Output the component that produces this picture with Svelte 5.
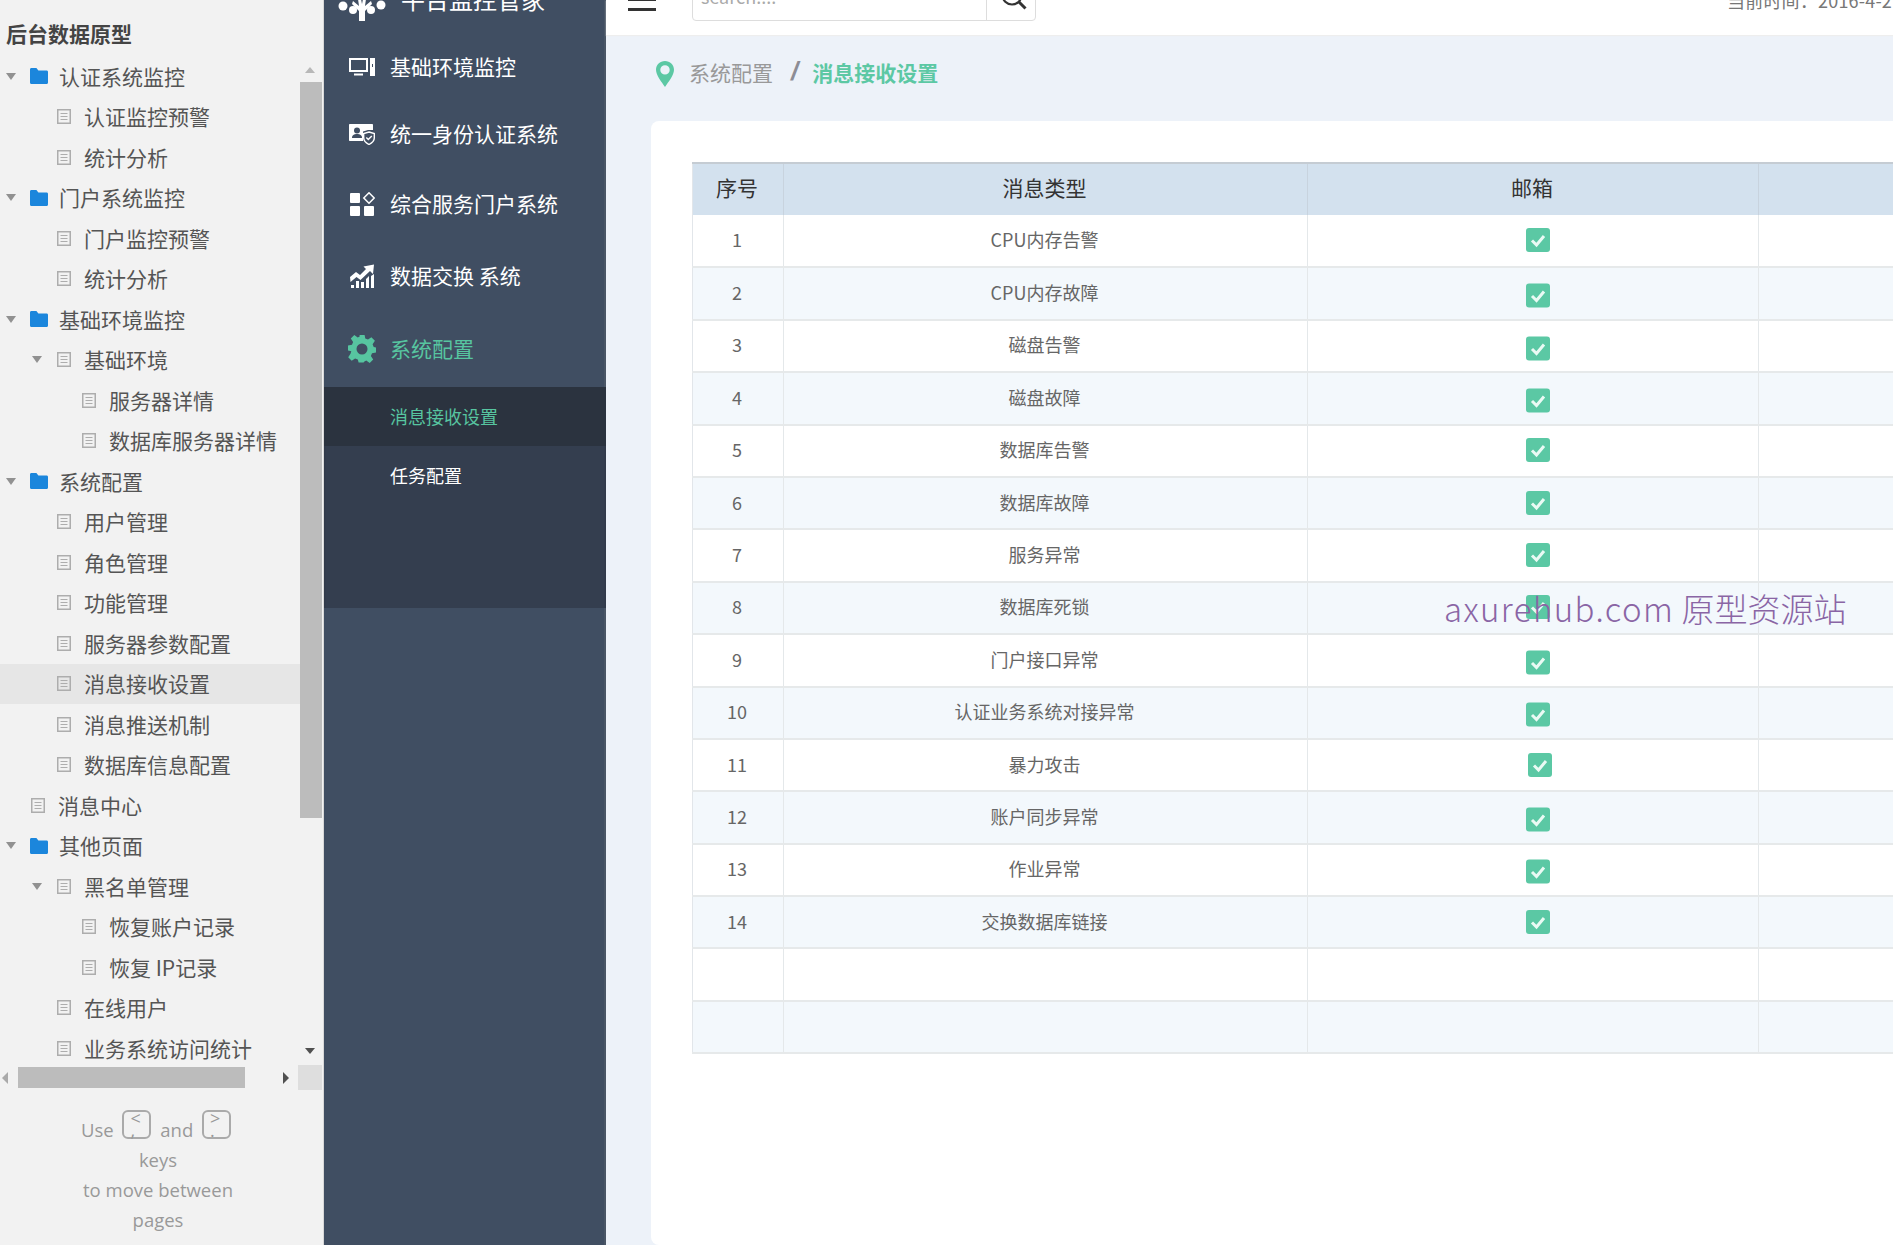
<script>
	const tree = [
		{ label: '认证系统监控', level: 0, folder: true, open: true },
		{ label: '认证监控预警', level: 1 },
		{ label: '统计分析', level: 1 },
		{ label: '门户系统监控', level: 0, folder: true, open: true },
		{ label: '门户监控预警', level: 1 },
		{ label: '统计分析', level: 1 },
		{ label: '基础环境监控', level: 0, folder: true, open: true },
		{ label: '基础环境', level: 1, open: true },
		{ label: '服务器详情', level: 2 },
		{ label: '数据库服务器详情', level: 2 },
		{ label: '系统配置', level: 0, folder: true, open: true },
		{ label: '用户管理', level: 1 },
		{ label: '角色管理', level: 1 },
		{ label: '功能管理', level: 1 },
		{ label: '服务器参数配置', level: 1 },
		{ label: '消息接收设置', level: 1, selected: true },
		{ label: '消息推送机制', level: 1 },
		{ label: '数据库信息配置', level: 1 },
		{ label: '消息中心', level: 0 },
		{ label: '其他页面', level: 0, folder: true, open: true },
		{ label: '黑名单管理', level: 1, open: true },
		{ label: '恢复账户记录', level: 2 },
		{ label: '恢复 IP记录', level: 2 },
		{ label: '在线用户', level: 1 },
		{ label: '业务系统访问统计', level: 1 }
	];

	const navItems = [
		{ label: '基础环境监控', icon: 'monitor' },
		{ label: '统一身份认证系统', icon: 'card' },
		{ label: '综合服务门户系统', icon: 'apps' },
		{ label: '数据交换 系统', icon: 'chart' },
		{ label: '系统配置', icon: 'gear', active: true }
	];

	const rows = [
		{ name: 'CPU内存告警' },
		{ name: 'CPU内存故障', low: true },
		{ name: '磁盘告警', low: true },
		{ name: '磁盘故障', low: true },
		{ name: '数据库告警' },
		{ name: '数据库故障' },
		{ name: '服务异常' },
		{ name: '数据库死锁' },
		{ name: '门户接口异常', low: true },
		{ name: '认证业务系统对接异常', low: true },
		{ name: '暴力攻击', nudge: true },
		{ name: '账户同步异常', low: true },
		{ name: '作业异常', low: true },
		{ name: '交换数据库链接' }
	];
</script>

<div class="page">
	<aside class="side">
		<div class="side-title">后台数据原型</div>
		<div class="tree">
			{#each tree as item}
				<div class="row level{item.level}" class:selected={item.selected}>
					<span class="caret-slot">
						{#if item.open}<i class="caret"></i>{/if}
					</span>
					{#if item.folder}
						<svg class="folder" viewBox="0 0 18 16" width="18" height="16">
							<path d="M0 1.5C0 .7.6 0 1.400 0h5l2 2.500h8.200c.8 0 1.400.6 1.400 1.400v10.600c0 .8-.6 1.500-1.400 1.500H1.400C.6 16 0 15.300 0 14.500z" fill="#1b86dc" />
						</svg>
					{:else}
						<svg class="doc" viewBox="0 0 14 15" width="14" height="15">
							<rect x=".75" y=".75" width="12.500" height="13.500" fill="none" stroke="#adadad" stroke-width="1.500" />
							<path d="M3.500 4.500h7M3.500 7.500h7M3.500 10.500h7" stroke="#adadad" stroke-width="1.200" />
						</svg>
					{/if}
					<span class="row-label">{item.label}</span>
				</div>
			{/each}
			<div class="vbar">
				<i class="arrow up"></i>
				<div class="vthumb"></div>
				<i class="arrow down"></i>
			</div>
		</div>
		<div class="hbar">
			<i class="arrow left"></i>
			<div class="hthumb"></div>
			<i class="arrow right"></i>
			<div class="corner"></div>
		</div>
		<div class="hint">
			<div>Use <span class="key">&lt;<br />,</span> and <span class="key">&gt;<br />.</span></div>
			<div>keys</div>
			<div>to move between</div>
			<div>pages</div>
		</div>
	</aside>

	<nav class="nav">
		<div class="brand">
			<svg class="brand-icon" viewBox="0 0 48 22" width="48" height="22">
				<g fill="#fff">
					<circle cx="5" cy="7" r="4.500" />
					<circle cx="15" cy="11" r="4" />
					<circle cx="43" cy="6" r="4.500" />
					<circle cx="33" cy="11" r="4" />
					<path d="M20 0h3l1 5 1-5h3l-1 7 6-5 1 3-7 7v10h-6V12l-7-7 1-3 6 5z" />
				</g>
			</svg>
			<span>平台监控管家</span>
		</div>
		{#each navItems as item}
			<div class="nav-item" class:active={item.active}>
				<span class="nav-icon">
					{#if item.icon === 'monitor'}
						<svg viewBox="0 0 26 18" width="26" height="18">
							<rect x="1" y="1" width="17" height="12" fill="none" stroke="#fff" stroke-width="2" />
							<path d="M5 16.500h9" stroke="#fff" stroke-width="2" />
							<rect x="21" y="0" width="5" height="18" fill="#fff" />
							<path d="M23.500 6v3" stroke="#404e62" stroke-width="1" />
						</svg>
					{:else if item.icon === 'card'}
						<svg viewBox="0 0 26 22" width="26" height="22">
							<path d="M1 1h22c.6 0 1 .4 1 1v5h-5l-5 1.500V18H1c-.6 0-1-.4-1-1V2c0-.6.4-1 1-1z" fill="#fff" />
							<circle cx="8" cy="7.500" r="3" fill="#404e62" />
							<path d="M3 15c0-3 2-4 5-4s5 1 5 4z" fill="#404e62" />
							<path d="M20 9l5.300 1.500v4.500c0 3-2.400 5-5.300 6.500-2.900-1.500-5.300-3.500-5.300-6.500v-4.500z" fill="none" stroke="#fff" stroke-width="1.400" />
							<path d="M17.300 14.500l2 2 3.500-3.500" fill="none" stroke="#fff" stroke-width="1.400" />
						</svg>
					{:else if item.icon === 'apps'}
						<svg viewBox="0 0 25 24" width="25" height="24">
							<rect x="0" y="1" width="10" height="10" rx="1" fill="#fff" />
							<rect x="0" y="14" width="10" height="10" rx="1" fill="#fff" />
							<rect x="14" y="14" width="10" height="10" rx="1" fill="#fff" />
							<path d="M19 .8l5.200 5.200-5.200 5.200L13.800 6z" fill="none" stroke="#fff" stroke-width="1.500" />
						</svg>
					{:else if item.icon === 'chart'}
						<svg viewBox="0 0 24 24" width="24" height="24">
							<path d="M0 13l6-5 4 3 6-6-2.500-2.500L24 .5 23 10l-3-3-9.500 9-4-3-6 5z" fill="#fff" />
							<path d="M1 24h3v-3H1zM6 24h3v-7H6zM11 24h3v-6h-3zM16 24h3V12l-3 3zM21 24h3V10l-3 2z" fill="#fff" />
						</svg>
					{:else}
						<svg viewBox="0 0 28 28" width="28" height="28">
							<path d="M11.500 0h5l.8 4 2.700 1.100 3.400-2.300 3.500 3.500-2.300 3.400L25.700 12.400l2.300.6v5l-4 .8-1.100 2.700 2.300 3.400-3.500 3.500-3.400-2.300-1.900.8-.8 1.100h-5l-.8-3-2.700-1.100-3.400 2.300-3.500-3.500 2.300-3.400L3.300 16.800l-3.300-.8v-5l4-.8 1.100-2.700-2.300-3.400 3.500-3.500 3.400 2.300 2-.9z" fill="#57c5a0" transform="translate(0 -.5)" />
							<circle cx="14" cy="14" r="5.500" fill="#404e62" />
						</svg>
					{/if}
				</span>
				<span class="nav-label">{item.label}</span>
			</div>
		{/each}
		<div class="sub">
			<div class="sub-item current">消息接收设置</div>
			<div class="sub-item">任务配置</div>
		</div>
	</nav>

	<main class="main">
		<header class="top">
			<div class="burger"><i></i><i></i><i></i></div>
			<div class="search">
				<span class="search-text">search....</span>
				<span class="search-btn">
					<svg viewBox="0 0 28 28" width="28" height="28">
						<circle cx="12" cy="12" r="9.500" fill="none" stroke="#333" stroke-width="2.200" />
						<path d="M19 19l6.500 6.500" stroke="#333" stroke-width="3" />
					</svg>
				</span>
			</div>
			<div class="time">当前时间：2016-4-2</div>
		</header>

		<div class="crumbs">
			<svg viewBox="0 0 18 26" width="18" height="26">
				<path fill-rule="evenodd" d="M9 0c5 0 9 3.800 9 8.800 0 5.500-5.500 12-9 17.200-3.500-5.200-9-11.700-9-17.200C0 3.800 4 0 9 0zm0 4.200a4.700 4.700 0 1 0 0 9.400 4.700 4.700 0 0 0 0-9.400z" fill="#5cc8a4" />
			</svg>
			<span class="crumb">系统配置</span>
			<span class="slash">/</span>
			<span class="crumb-now">消息接收设置</span>
		</div>

		<section class="card">
			<table>
				<colgroup>
					<col class="c-no" />
					<col class="c-type" />
					<col class="c-mail" />
					<col class="c-rest" />
				</colgroup>
				<thead>
					<tr>
						<th>序号</th>
						<th>消息类型</th>
						<th>邮箱</th>
						<th></th>
					</tr>
				</thead>
				<tbody>
					{#each rows as row, i}
						<tr>
							<td>{i + 1}</td>
							<td>{row.name}</td>
							<td>
								<span class="check" class:low={row.low} class:nudge={row.nudge}>
									<svg viewBox="0 0 24 24" width="24" height="24">
										<path d="M6 12.500l4.500 4.500 7.500-9" fill="none" stroke="#eafaf4" stroke-width="3" />
									</svg>
								</span>
							</td>
							<td></td>
						</tr>
					{/each}
					<tr><td></td><td></td><td></td><td></td></tr>
					<tr><td></td><td></td><td></td><td></td></tr>
				</tbody>
			</table>
			<div class="watermark"><span class="wm-latin">axurehub.com</span> 原型资源站</div>
		</section>
	</main>
</div>

<style>
	:global(body) {
		margin: 0;
		overflow: hidden;
		font-family: 'Noto Sans CJK SC', 'Noto Sans', sans-serif;
	}

	.page {
		display: flex;
		width: 1893px;
		height: 1245px;
		overflow: hidden;
		background: #edf2f9;
	}

	/* left page tree */
	.side {
		flex: none;
		width: 324px;
		background: #f2f2f2;
		box-sizing: border-box;
		border-right: 1px solid #d8d8d8;
		color: #555;
	}

	.side-title {
		height: 55px;
		padding: 19px 0 0 6px;
		box-sizing: border-box;
		font-size: 21px;
		line-height: 28px;
		font-weight: 700;
		color: #444;
	}

	.tree {
		position: relative;
		height: 1012px;
		padding-top: 1px;
		box-sizing: border-box;
	}

	.row {
		display: flex;
		align-items: center;
		width: 300px;
		height: 40.500px;
		box-sizing: border-box;
		font-size: 21px;
		white-space: nowrap;
	}

	.row.selected {
		background: #e6e6e6;
	}

	.level0 { padding-left: 6px; }
	.level1 { padding-left: 32px; }
	.level2 { padding-left: 57px; }

	.caret-slot {
		flex: none;
		width: 24px;
		display: flex;
	}

	.caret {
		width: 0;
		height: 0;
		border-left: 5.500px solid transparent;
		border-right: 5.500px solid transparent;
		border-top: 7px solid #919191;
	}

	.folder,
	.doc {
		flex: none;
		margin-right: 11px;
	}

	.doc {
		margin-left: 1px;
		margin-right: 13px;
	}

	.row-label {
		line-height: 1;
	}

	.vbar {
		position: absolute;
		top: 0;
		left: 300px;
		width: 22px;
		height: 1012px;
	}

	.vthumb {
		position: absolute;
		top: 27px;
		left: 0;
		width: 22px;
		height: 736px;
		background: #bcbcbc;
	}

	.arrow {
		position: absolute;
		width: 0;
		height: 0;
	}

	.arrow.up {
		top: 12px;
		left: 5px;
		border-left: 5.500px solid transparent;
		border-right: 5.500px solid transparent;
		border-bottom: 6px solid #b8b8b8;
	}

	.arrow.down {
		top: 993px;
		left: 5px;
		border-left: 5.500px solid transparent;
		border-right: 5.500px solid transparent;
		border-top: 6px solid #505050;
	}

	.hbar {
		position: relative;
		height: 22px;
	}

	.hthumb {
		position: absolute;
		left: 18px;
		top: 0;
		width: 227px;
		height: 21px;
		background: #bcbcbc;
	}

	.arrow.left {
		left: 2px;
		top: 5px;
		border-top: 6px solid transparent;
		border-bottom: 6px solid transparent;
		border-right: 6px solid #aaa;
	}

	.arrow.right {
		left: 283px;
		top: 5px;
		border-top: 6px solid transparent;
		border-bottom: 6px solid transparent;
		border-left: 6px solid #505050;
	}

	.corner {
		position: absolute;
		left: 298px;
		top: -2px;
		width: 24px;
		height: 25px;
		background: #dedede;
	}

	.hint {
		width: 316px;
		padding-top: 26px;
		text-align: center;
		font-family: 'Open Sans', sans-serif;
		font-size: 18.500px;
		line-height: 30px;
		color: #999;
	}

	.key {
		display: inline-block;
		width: 29px;
		height: 29px;
		margin: -6px 4px -3px;
		padding-left: 6px;
		box-sizing: border-box;
		border: 2px solid #aaa;
		border-radius: 6px;
		font-size: 18px;
		line-height: 12px;
		text-align: left;
		vertical-align: 0;
	}

	/* dark navigation */
	.nav {
		flex: none;
		width: 282px;
		background: #404e62;
		box-shadow: inset -2px 0 0 #4a5666;
		color: #fff;
		font-size: 21px;
	}

	.brand {
		display: flex;
		align-items: flex-end;
		height: 33px;
		box-sizing: border-box;
		padding: 0 0 19px 14px;
		gap: 15px;
		font-size: 24px;
		line-height: 30px;
	}

	.brand-icon {
		flex: none;
		margin-bottom: -7px;
	}

	.nav-item {
		display: flex;
		align-items: center;
		padding-left: 24px;
		height: 70px;
	}

	.nav-item:nth-child(2) { height: 68px; }
	.nav-item:nth-child(3) { height: 66px; }
	.nav-item:nth-child(4) { height: 74px; }
	.nav-item:nth-child(6) { height: 76px; }

	.nav-item.active {
		color: #57c5a0;
	}

	.nav-icon {
		flex: none;
		width: 28px;
		margin-right: 14px;
		display: flex;
		justify-content: center;
	}

	.nav-label {
		margin-bottom: 3px;
	}

	.sub {
		height: 221px;
		background: #343e4f;
		box-shadow: inset 0 2px 2px #2b333f;
		font-size: 18px;
	}

	.sub-item {
		height: 59px;
		padding-left: 66px;
		line-height: 59px;
	}

	.sub-item.current {
		background: #2b333f;
		color: #57c5a0;
	}

	/* content */
	.main {
		flex: 1;
		min-width: 0;
	}

	.top {
		display: flex;
		align-items: flex-end;
		height: 35px;
		box-sizing: border-box;
		background: #fff;
		box-shadow: 0 1px 1px #eee;
	}

	.burger {
		flex: none;
		width: 28px;
		margin-left: 22px;
		margin-bottom: 24px;
	}

	.burger i {
		display: block;
		height: 3px;
		margin-top: 7px;
		background: #333;
	}

	.search {
		flex: none;
		display: flex;
		width: 344px;
		height: 50px;
		margin-left: 36px;
		margin-bottom: 14px;
		box-sizing: border-box;
		border: 1px solid #ddd;
		border-radius: 4px;
	}

	.search-text {
		flex: 1;
		padding: 14px 0 0 8px;
		font-size: 18px;
		line-height: 20px;
		color: #aaa;
	}

	.search-btn {
		width: 49px;
		box-sizing: border-box;
		border-left: 1px solid #ddd;
		padding: 11px 0 0 13px;
	}

	.time {
		flex: none;
		margin-left: 691px;
		margin-bottom: 24px;
		font-size: 18px;
		line-height: 22px;
		letter-spacing: 0.2px;
		color: #777;
		white-space: nowrap;
	}

	.crumbs {
		display: flex;
		align-items: center;
		height: 76px;
		padding-left: 50px;
		box-sizing: border-box;
		padding-top: 1px;
		font-size: 21px;
		color: #999;
	}

	.crumb {
		margin-left: 15px;
		margin-bottom: 4px;
	}

	.slash {
		margin-left: 18px;
		margin-bottom: 4px;
		font-family: 'Liberation Sans', sans-serif;
		font-size: 26px;
		font-style: italic;
		font-weight: 700;
		color: #8d8d95;
	}

	.crumb-now {
		margin-left: 14px;
		margin-bottom: 4px;
		font-weight: 700;
		color: #5cc8a4;
	}

	.card {
		position: relative;
		width: 1400px;
		height: 1124px;
		margin-left: 45px;
		margin-top: 10px;
		padding: 41px;
		box-sizing: border-box;
		background: #fff;
		border-radius: 8px;
	}

	table {
		width: 1290px;
		table-layout: fixed;
		border-collapse: collapse;
		border-left: 1px solid #e2e6ea;
		border-bottom: 2px solid #dfe3e6;
		font-size: 18px;
		color: #666;
	}

	.c-no { width: 91px; }
	.c-type { width: 524px; }
	.c-mail { width: 451px; }

	th {
		height: 52px;
		padding: 0 2px 5px 0;
		box-sizing: border-box;
		background: #d3e1ee;
		border-top: 2px solid #c5ccd3;
		border-right: 1px solid #c8d3de;
		font-size: 21px;
		font-weight: 400;
		color: #333;
	}

	td {
		height: 52.400px;
		padding: 0 2px 3px 0;
		text-align: center;
		border-right: 1px solid #e4e8ea;
		border-bottom: 2px solid #e6e9ea;
		box-sizing: border-box;
	}

	tbody tr:nth-child(even) td {
		background: #f3f8fc;
	}

	.check {
		display: inline-block;
		width: 24px;
		height: 24px;
		margin-left: 12px;
		border-radius: 3px;
		background: #5bc8a4;
		vertical-align: middle;
		transform: translateY(-1px);
	}

	.check svg {
		display: block;
	}

	.check.low {
		transform: translateY(1.500px);
	}

	.check.nudge {
		transform: translate(2px, -1px);
	}

	.watermark {
		position: absolute;
		left: 793px;
		top: 462px;
		font-size: 33px;
		line-height: 50px;
		font-weight: 300;
		color: #8a65a5;
		white-space: nowrap;
	}

	.wm-latin {
		letter-spacing: 1.400px;
	}
</style>
